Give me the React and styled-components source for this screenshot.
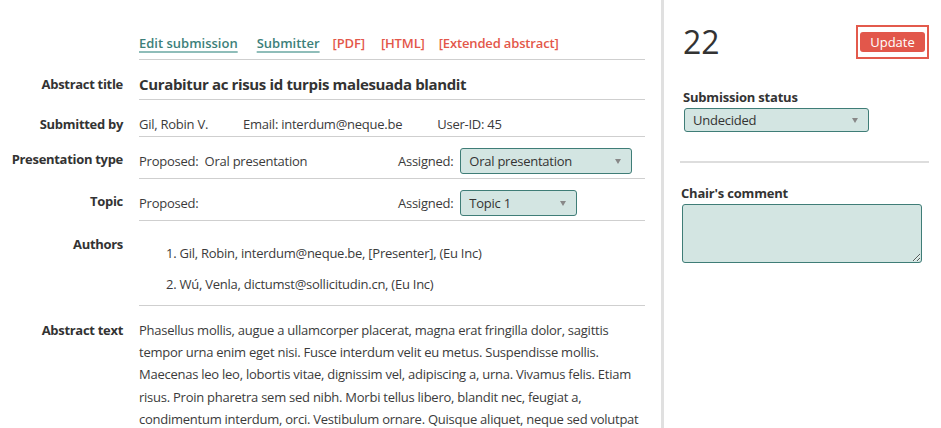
import React from "react";
import styled, { createGlobalStyle } from "styled-components";

const Global = createGlobalStyle`
  html, body { margin: 0; padding: 0; background: #fff; }
  body { font-family: "Open Sans", "Noto Sans", sans-serif; font-size: 13px; letter-spacing: -0.25px; color: #3b3b3b; }
  * { box-sizing: border-box; }
`;

const Page = styled.div`
  display: flex;
  width: 941px;
  height: 428px;
  overflow: hidden;
`;

const Main = styled.div`
  width: 664px;
  flex: none;
  padding-right: 19px;
  border-right: 3px solid #e0e0e0;
`;

const Row = styled.div`
  display: grid;
  grid-template-columns: 123px 506px;
  column-gap: 16px;
  align-items: start;
`;

const Label = styled.div`
  text-align: right;
  font-weight: 700;
  color: #333;
  line-height: 18px;
  letter-spacing: -0.3px;
  padding-top: ${(p) => p.$top}px;
`;

const Cell = styled.div`
  border-bottom: ${(p) => (p.$noBorder ? "none" : "1px solid #cfcfcf")};
  padding-top: ${(p) => p.$top}px;
  padding-bottom: ${(p) => p.$bottom}px;
  line-height: 18px;
`;

const Links = styled.div`
  display: flex;
  font-weight: 600;
  line-height: 20px;
  letter-spacing: 0;
`;

const TealLink = styled.a`
  color: #3d7f7a;
  text-decoration: underline;
  text-decoration-color: #8fbdb9;
  text-decoration-thickness: 2px;
  text-underline-offset: 3px;
  margin-right: ${(p) => p.$gap}px;
`;

const RedLink = styled.a`
  color: #e3574a;
  font-weight: 600;
  text-decoration: none;
  letter-spacing: -0.15px;
  margin-right: ${(p) => p.$gap || 0}px;
`;

const Title = styled.div`
  font-size: 15px;
  font-weight: 700;
  letter-spacing: -0.35px;
  color: #333;
  line-height: 22px;
`;

const Inline = styled.div`
  display: flex;
  gap: 35px;
`;

const Split = styled.div`
  display: grid;
  grid-template-columns: 259px auto;
  align-items: center;
`;

const Assigned = styled.div`
  display: flex;
  align-items: center;
  gap: 7px;
`;

const Select = styled.div`
  position: relative;
  width: ${(p) => p.$w}px;
  height: ${(p) => p.$h || 26}px;
  margin-left: ${(p) => p.$ml || 0}px;
  background: #d3e5e2;
  border: 1px solid #3f7d77;
  border-radius: 3px;
  padding-left: 8px;
  display: flex;
  align-items: center;
  color: #333;
  font-size: 13px;
`;

const Arrow = styled.span`
  position: absolute;
  right: 10px;
  top: 50%;
  margin-top: -2px;
  width: 0;
  height: 0;
  border-left: 3.5px solid transparent;
  border-right: 3.5px solid transparent;
  border-top: 5px solid #888;
`;

const AuthorList = styled.ol`
  margin: 0;
  padding: 0 0 0 27px;
  list-style: none;
  counter-reset: a;
  li {
    counter-increment: a;
    line-height: 18px;
    margin-bottom: 13px;
  }
  li:last-child { margin-bottom: 0; }
  li::before { content: counter(a) ". "; }
`;

const Abstract = styled.div`
  line-height: 22.2px;
`;

const Side = styled.div`
  flex: 1;
  padding: 22px 12px 0 16px;
`;

const SideHead = styled.div`
  display: flex;
  justify-content: space-between;
  align-items: center;
  padding-left: 3px;
`;

const Number = styled.div`
  font-size: 32px;
  color: #333;
  font-weight: 400;
  letter-spacing: 0;
  line-height: 40px;
`;

const FocusRing = styled.span`
  display: inline-flex;
  border: 2px solid #e35a4c;
  padding: 5px 2px;
`;

const Button = styled.button`
  background: #e2574b;
  color: #fff;
  border: none;
  border-radius: 3px;
  font-family: inherit;
  font-size: 13px;
  height: 20px;
  width: 65px;
  padding: 0;
  line-height: 20px;
`;

const SideLabel = styled.div`
  font-weight: 700;
  color: #333;
  line-height: 18px;
  letter-spacing: -0.2px;
  padding-left: ${(p) => p.$left || 0}px;
  margin-top: ${(p) => p.$mt}px;
  margin-bottom: 2px;
`;

const SideRule = styled.hr`
  border: none;
  border-top: 2px solid #ddd;
  margin: 29px 0 0 0;
`;

const Comment = styled.textarea`
  display: block;
  margin-left: 2px;
  width: 240px;
  height: 59px;
  background: #d3e5e2;
  border: 1px solid #3f7d77;
  border-radius: 3px;
  font-family: inherit;
`;

export default function App() {
  return (
    <Page>
      <Global />
      <Main>
        <Row>
          <div />
          <Cell $top={33} $bottom={6}>
            <Links>
              <TealLink $gap={19}>Edit submission</TealLink>
              <TealLink $gap={13}>Submitter</TealLink>
              <RedLink $gap={16}>[PDF]</RedLink>
              <RedLink $gap={14}>[HTML]</RedLink>
              <RedLink>[Extended abstract]</RedLink>
            </Links>
          </Cell>
        </Row>
        <Row>
          <Label $top={15}>Abstract title</Label>
          <Cell $top={13} $bottom={4}>
            <Title>Curabitur ac risus id turpis malesuada blandit</Title>
          </Cell>
        </Row>
        <Row>
          <Label $top={15}>Submitted by</Label>
          <Cell $top={15} $bottom={3}>
            <Inline>
              <span>Gil, Robin V.</span>
              <span>Email: interdum@neque.be</span>
              <span>User-ID: 45</span>
            </Inline>
          </Cell>
        </Row>
        <Row>
          <Label $top={13}>Presentation type</Label>
          <Cell $top={11} $bottom={4}>
            <Split>
              <span>Proposed:&nbsp; Oral presentation</span>
              <Assigned>
                Assigned:
                <Select $w={172}>
                  Oral presentation
                  <Arrow />
                </Select>
              </Assigned>
            </Split>
          </Cell>
        </Row>
        <Row>
          <Label $top={13}>Topic</Label>
          <Cell $top={11} $bottom={4}>
            <Split>
              <span>Proposed:</span>
              <Assigned>
                Assigned:
                <Select $w={117}>
                  Topic 1
                  <Arrow />
                </Select>
              </Assigned>
            </Split>
          </Cell>
        </Row>
        <Row>
          <Label $top={14}>Authors</Label>
          <Cell $top={23} $bottom={12}>
            <AuthorList>
              <li>Gil, Robin, interdum@neque.be, [Presenter], (Eu Inc)</li>
              <li>Wú, Venla, dictumst@sollicitudin.cn, (Eu Inc)</li>
            </AuthorList>
          </Cell>
        </Row>
        <Row>
          <Label $top={15}>Abstract text</Label>
          <Cell $top={13} $bottom={0} $noBorder>
            <Abstract>
              Phasellus mollis, augue a ullamcorper placerat, magna erat fringilla dolor, sagittis tempor urna
              enim eget nisi. Fusce interdum velit eu metus. Suspendisse mollis. Maecenas leo leo, lobortis
              vitae, dignissim vel, adipiscing a, urna. Vivamus felis. Etiam risus. Proin pharetra sem sed
              nibh. Morbi tellus libero, blandit nec, feugiat a, condimentum interdum, orci. Vestibulum ornare.
              Quisque aliquet, neque sed volutpat tincidunt, massa lectus consequat nisi, vel viverra libero
              nunc nec ipsum.
            </Abstract>
          </Cell>
        </Row>
      </Main>
      <Side>
        <SideHead>
          <Number>22</Number>
          <FocusRing>
            <Button>Update</Button>
          </FocusRing>
        </SideHead>
        <SideLabel $mt={26} $left={3}>Submission status</SideLabel>
        <Select $w={185} $h={24} $ml={4}>
          Undecided
          <Arrow />
        </Select>
        <SideRule />
        <SideLabel $mt={21} $left={1}>Chair's comment</SideLabel>
        <Comment />
      </Side>
    </Page>
  );
}
